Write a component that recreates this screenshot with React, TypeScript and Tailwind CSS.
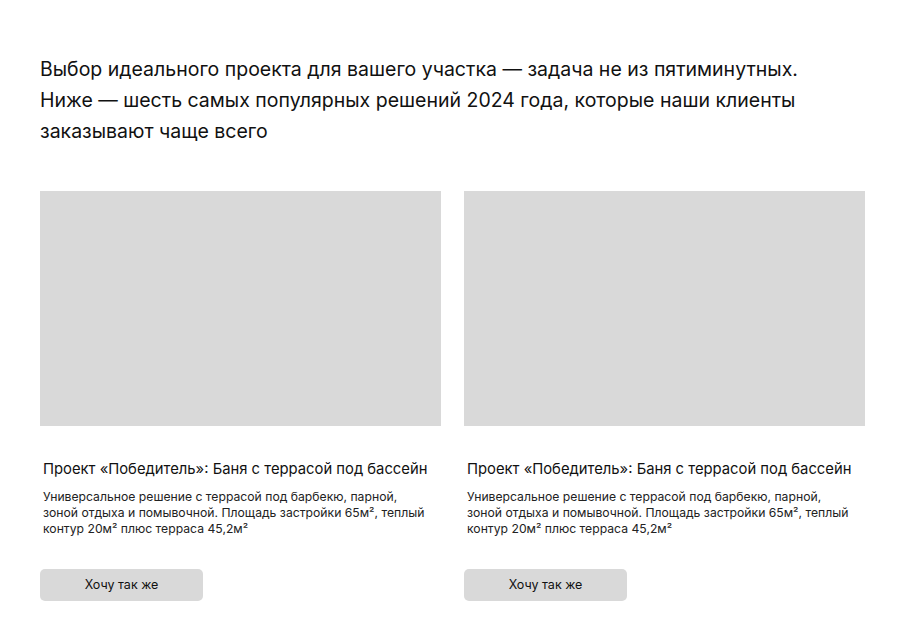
const cards = [0, 1];

function ProjectCard() {
  return (
    <div className="flex flex-col">
      <div className="h-[235px] bg-[#d9d9d9]" />
      <h3 className="mt-[33px] pl-[3px] text-[14.8px] leading-[20px] text-[#111]">
        Проект «Победитель»: Баня с террасой под бассейн
      </h3>
      <p className="mt-[10px] pl-[3px] text-[12.2px] leading-[16px] text-[#222]">
        Универсальное решение с террасой под барбекю, парной,
        <br />
        зоной отдыха и помывочной. Площадь застройки 65м², теплый
        <br />
        контур 20м² плюс терраса 45,2м²
      </p>
      <button className="mt-[32px] flex h-[32px] w-[163px] items-center justify-center rounded-[5px] bg-[#d9d9d9] text-[12.5px] text-[#111]">
        Хочу так же
      </button>
    </div>
  );
}

export default function App() {
  return (
    <div
      className="min-h-[642px] w-[906px] bg-white px-[40px] pt-[54px]"
      style={{ fontFamily: "Inter, 'Noto Sans', sans-serif" }}
    >
      <p className="text-[19.5px] leading-[31px] text-[#111]">
        Выбор идеального проекта для вашего участка — задача не из пятиминутных.
        <br />
        Ниже — шесть самых популярных решений 2024 года, которые наши клиенты
        <br />
        заказывают чаще всего
      </p>
      <div className="mt-[44px] grid w-[825px] grid-cols-2 gap-[23px]">
        {cards.map((c) => (
          <ProjectCard key={c} />
        ))}
      </div>
    </div>
  );
}
